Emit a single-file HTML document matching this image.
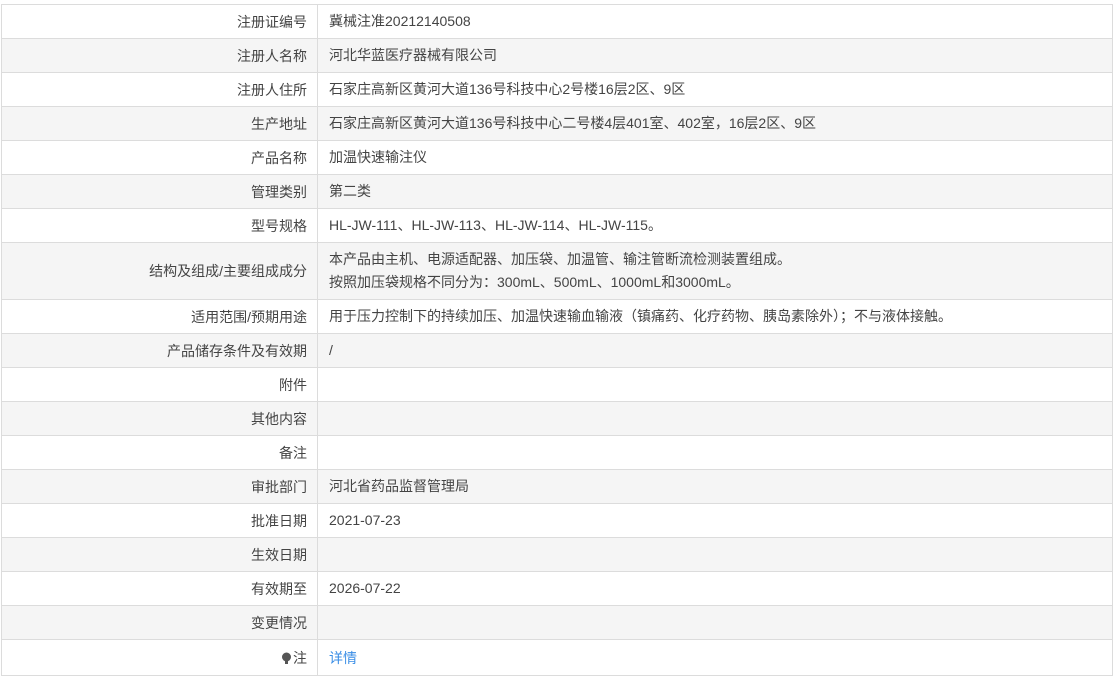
<!DOCTYPE html>
<html><head><meta charset="utf-8"><style>
body{margin:0;width:1114px;height:688px;background:#fff;font-family:"Liberation Sans","Noto Sans CJK SC",sans-serif;font-size:14px;color:#444;position:relative;overflow:hidden}
.r{position:absolute;left:1px;width:1112px;border-top:1px solid #dcdcdc;box-sizing:border-box}
.r.g{background:#f5f5f5}
.l{position:absolute;left:0;width:317px;top:0;bottom:0;border-right:1px solid #dcdcdc;text-align:right;padding-right:10px;box-sizing:border-box;display:flex;align-items:center;justify-content:flex-end}
.v{position:absolute;left:328px;top:0;bottom:0;display:flex;flex-direction:column;justify-content:center;line-height:23px}
.edge{position:absolute;left:1px;top:4px;width:1px;height:672px;background:#dcdcdc}
.edge2{position:absolute;left:1112px;top:4px;width:1px;height:672px;background:#dcdcdc}
.bot{position:absolute;left:1px;top:675px;width:1112px;height:1px;background:#dcdcdc}
a{color:#3a8ee6;text-decoration:none}
</style></head><body>
<div class="r" style="top:4px;height:34px"><div class="l">注册证编号</div><div class="v">冀械注准20212140508</div></div>
<div class="r g" style="top:38px;height:34px"><div class="l">注册人名称</div><div class="v">河北华蓝医疗器械有限公司</div></div>
<div class="r" style="top:72px;height:34px"><div class="l">注册人住所</div><div class="v">石家庄高新区黄河大道136号科技中心2号楼16层2区、9区</div></div>
<div class="r g" style="top:106px;height:34px"><div class="l">生产地址</div><div class="v">石家庄高新区黄河大道136号科技中心二号楼4层401室、402室，16层2区、9区</div></div>
<div class="r" style="top:140px;height:34px"><div class="l">产品名称</div><div class="v">加温快速输注仪</div></div>
<div class="r g" style="top:174px;height:34px"><div class="l">管理类别</div><div class="v">第二类</div></div>
<div class="r" style="top:208px;height:34px"><div class="l">型号规格</div><div class="v">HL-JW-111、HL-JW-113、HL-JW-114、HL-JW-115。</div></div>
<div class="r g" style="top:242px;height:57px"><div class="l">结构及组成/主要组成成分</div><div class="v"><div>本产品由主机、电源适配器、加压袋、加温管、输注管断流检测装置组成。</div><div>按照加压袋规格不同分为：300mL、500mL、1000mL和3000mL。</div></div></div>
<div class="r" style="top:299px;height:34px"><div class="l">适用范围/预期用途</div><div class="v">用于压力控制下的持续加压、加温快速输血输液（镇痛药、化疗药物、胰岛素除外）；不与液体接触。</div></div>
<div class="r g" style="top:333px;height:34px"><div class="l">产品储存条件及有效期</div><div class="v">/</div></div>
<div class="r" style="top:367px;height:34px"><div class="l">附件</div><div class="v"></div></div>
<div class="r g" style="top:401px;height:34px"><div class="l">其他内容</div><div class="v"></div></div>
<div class="r" style="top:435px;height:34px"><div class="l">备注</div><div class="v"></div></div>
<div class="r g" style="top:469px;height:34px"><div class="l">审批部门</div><div class="v">河北省药品监督管理局</div></div>
<div class="r" style="top:503px;height:34px"><div class="l">批准日期</div><div class="v">2021-07-23</div></div>
<div class="r g" style="top:537px;height:34px"><div class="l">生效日期</div><div class="v"></div></div>
<div class="r" style="top:571px;height:34px"><div class="l">有效期至</div><div class="v">2026-07-22</div></div>
<div class="r g" style="top:605px;height:34px"><div class="l">变更情况</div><div class="v"></div></div>
<div class="r" style="top:639px;height:37px"><div class="l"><svg width="11" height="13" viewBox="0 0 11 13" style="margin-right:1px"><circle cx="5.5" cy="5" r="4.5" fill="#555"/><rect x="4" y="9" width="3" height="3" fill="#555"/></svg>注</div><div class="v"><a>详情</a></div></div>
<div class="edge"></div><div class="edge2"></div><div class="bot"></div>
</body></html>
